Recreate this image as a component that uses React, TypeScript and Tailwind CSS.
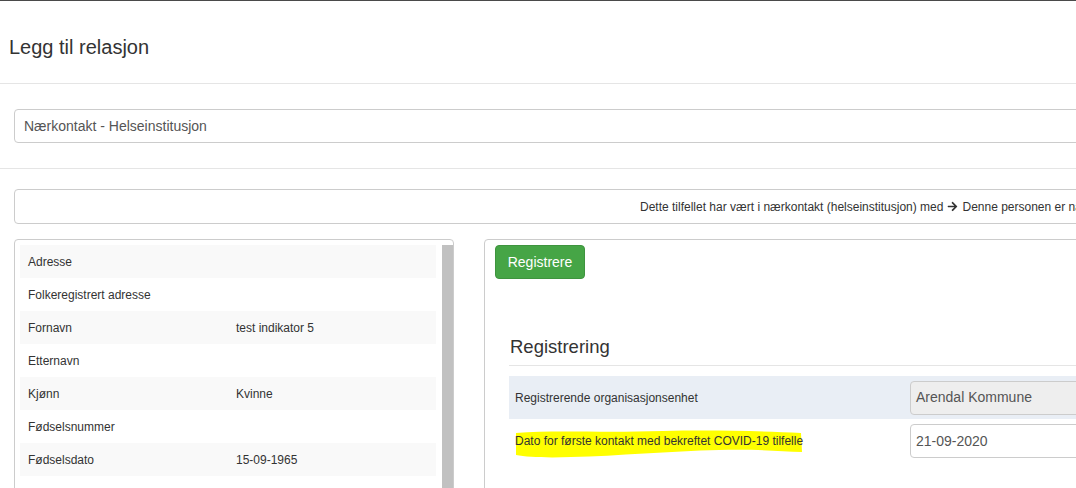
import React from "react";
import { FaArrowRight } from "react-icons/fa";

const PERSON_ROWS = [
  { label: "Adresse", value: "" },
  { label: "Folkeregistrert adresse", value: "" },
  { label: "Fornavn", value: "test indikator 5" },
  { label: "Etternavn", value: "" },
  { label: "Kjønn", value: "Kvinne" },
  { label: "Fødselsnummer", value: "" },
  { label: "Fødselsdato", value: "15-09-1965" },
  { label: "Alder", value: "55" },
];

function Highlight() {
  // hand-drawn yellow marker over the label
  return (
    <svg className="absolute left-[4px] top-[8px] pointer-events-none" width="292" height="34" viewBox="0 0 292 34">
      <path
        d="M3,6 C40,3 90,6 150,4 C200,3 250,4 288,6 L289,25 C266,24 241,22 206,23 C156,24 106,29 58,30 C33,31 14,30 3,28 Z"
        fill="#ffff00"
      />
    </svg>
  );
}

export default function App() {
  return (
    <div className="w-[1076px] h-[488px] overflow-hidden bg-white border-t border-[#4a4a4a] font-['Liberation_Sans',Arial,sans-serif] text-[#333]">
      <div className="w-[1600px]">
        {/* Header */}
        <div className="h-[83px] border-b border-[#e5e5e5] pl-[9px] pt-[34px]">
          <h4 className="text-[20px] leading-[24px] text-[#333]">Legg til relasjon</h4>
        </div>

        {/* Relation type */}
        <div className="h-[85px] border-b border-[#e5e5e5] pl-[14px] pt-[25px]">
          <div className="h-[34px] w-[1560px] border border-[#ccc] rounded-[4px] flex items-center pl-[9px] text-[14px] text-[#555]">
            Nærkontakt - Helseinstitusjon
          </div>
        </div>

        <div className="pl-[14px] pt-[20px]">
          {/* Info */}
          <div className="h-[35px] w-[1560px] border border-[#ccc] rounded-[4px] flex items-center pl-[625px] text-[12px] text-[#333] whitespace-nowrap">
            Dette tilfellet har vært i nærkontakt (helseinstitusjon) med
            <FaArrowRight className="mx-[4px] text-[11px]" />
            Denne personen er nærkontakt
          </div>

          <div className="flex gap-[30px] mt-[15px]">
            {/* Person panel */}
            <div className="w-[440px] h-[300px] border border-[#ccc] rounded-t-[4px] flex pl-[5px] pt-[5px]">
              <table className="w-[416px] text-[12px] border-collapse self-start">
                <tbody>
                  {PERSON_ROWS.map((r, i) => (
                    <tr key={r.label} className={`h-[33px] ${i % 2 === 0 ? "bg-[#f9f9f9]" : "bg-white"}`}>
                      <td className="w-[208px] pl-[8px]">{r.label}</td>
                      <td className="pl-[8px]">{r.value}</td>
                    </tr>
                  ))}
                </tbody>
              </table>
              <div className="ml-[6px] w-[11px] bg-[#c1c1c1]" />
            </div>

            {/* Registration panel */}
            <div className="w-[1000px] h-[300px] border border-[#ccc] rounded-t-[4px] pl-[10px] pt-[5px]">
              <button className="h-[34px] w-[90px] rounded-[4px] bg-[#46a546] border border-[#3e943e] text-white text-[14px]">
                Registrere
              </button>

              <div className="pl-[14px] pt-[56px]">
                <div className="border-b border-[#e5e5e5] pb-[6px] pl-[1px] text-[18.5px] leading-[24px] text-[#333]">
                  Registrering
                </div>
                <table className="mt-[10px] w-[900px] text-[12px] border-collapse">
                  <tbody>
                    <tr className="h-[43px] bg-[#e9eef5]">
                      <td className="w-[401px] pl-[6px]">Registrerende organisasjonsenhet</td>
                      <td>
                        <div className="h-[34px] border border-[#ccc] rounded-[4px] bg-[#eee] flex items-center pl-[5px] text-[14px] text-[#555]">
                          Arendal Kommune
                        </div>
                      </td>
                    </tr>
                    <tr className="h-[44px]">
                      <td className="pl-[6px] relative">
                        <Highlight />
                        <span className="relative">Dato for første kontakt med bekreftet COVID-19 tilfelle</span>
                      </td>
                      <td>
                        <div className="h-[34px] border border-[#ccc] rounded-[4px] bg-white flex items-center pl-[5px] text-[14px] text-[#555]">
                          21-09-2020
                        </div>
                      </td>
                    </tr>
                  </tbody>
                </table>
              </div>
            </div>
          </div>
        </div>
      </div>
    </div>
  );
}
